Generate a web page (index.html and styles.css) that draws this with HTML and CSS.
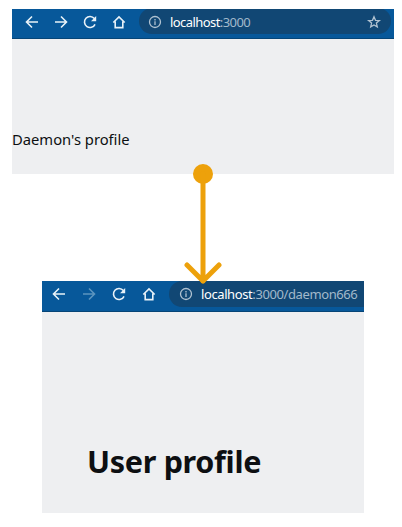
FILE: index.html
```html
<!DOCTYPE html>
<html lang="en">
<head>
<meta charset="utf-8">
<title>Profile navigation</title>
<link rel="stylesheet" href="styles.css">
</head>
<body>
<svg class="symbols" aria-hidden="true">
  <symbol id="back" viewBox="0 0 16 16"><path d="M14 8H2.500M8 2.500 2.500 8 8 13.500"/></symbol>
  <symbol id="forward" viewBox="0 0 16 16"><path d="M2 8h11.500M8 2.500 13.500 8 8 13.500"/></symbol>
  <symbol id="reload" viewBox="0 0 16 16"><path d="M13 10.300A5.500 5.500 0 1 1 12.300 4.600"/><path class="solid" d="M14.200 2v5.200H9z"/></symbol>
  <symbol id="home" viewBox="0 0 16 16"><path d="M2.300 8.500 8 2.900l5.700 5.600M4.200 7.400v6.200h7.600v-6.200"/></symbol>
  <symbol id="info" viewBox="0 0 16 16"><circle cx="8" cy="8" r="5.500"/><path d="M8 7.300v3.700M8 5v1.400"/></symbol>
  <symbol id="star" viewBox="0 0 16 16"><path d="m8 2.700 1.500 3.600 3.900.3-3 2.500.9 3.800L8 10.900l-3.300 2 .9-3.800-3-2.500 3.900-.3z"/></symbol>
</svg>
<main class="flow">
  <section class="window first">
    <header class="toolbar">
      <nav class="buttons">
        <svg class="icon"><use href="#back"/></svg>
        <svg class="icon"><use href="#forward"/></svg>
        <svg class="icon"><use href="#reload"/></svg>
        <svg class="icon"><use href="#home"/></svg>
      </nav>
      <div class="address">
        <svg class="icon info"><use href="#info"/></svg>
        <span class="url"><span class="host">localhost</span>:3000</span>
        <svg class="icon star"><use href="#star"/></svg>
      </div>
    </header>
    <p class="label">Daemon's profile</p>
  </section>
  <svg class="arrow" viewBox="0 0 38 120">
    <circle cx="19" cy="10" r="10"/>
    <path d="M19 10v107M3 101l16 16 16-16"/>
  </svg>
  <section class="window second">
    <header class="toolbar">
      <nav class="buttons">
        <svg class="icon"><use href="#back"/></svg>
        <svg class="icon disabled"><use href="#forward"/></svg>
        <svg class="icon"><use href="#reload"/></svg>
        <svg class="icon"><use href="#home"/></svg>
      </nav>
      <div class="address">
        <svg class="icon info"><use href="#info"/></svg>
        <span class="url"><span class="host">localhost</span>:3000/daemon666</span>
      </div>
    </header>
    <h1 class="title">User profile</h1>
  </section>
</main>
</body>
</html>
```
FILE: styles.css
```css
* { box-sizing: border-box; }
body {
  margin: 0;
  background: #fff;
  color: #0d0f12;
  font-family: "Noto Sans", "Open Sans", sans-serif;
}
.symbols { position: absolute; width: 0; height: 0; }
.flow {
  position: relative;
  display: flex;
  flex-direction: column;
  height: 527px;
  padding: 9px 0 0 12px;
}
.window { background: #eeeff1; overflow: hidden; }
.first { width: 382px; height: 165px; }
.second { width: 322px; height: 232px; margin: 107px 0 0 30px; }
.toolbar {
  display: flex;
  align-items: flex-start;
  height: 30px;
  background: #07589a;
  border-bottom: 1px solid #064577;
}
.second .toolbar { height: 31px; }
.buttons { display: flex; gap: 13px; padding: 5px 0 0 12px; }
.second .buttons { gap: 14px; padding-left: 9px; }
.icon {
  flex: none;
  width: 16px;
  height: 16px;
  fill: none;
  stroke: #e9f2f8;
  stroke-width: 1.6;
}
.solid { fill: #e9f2f8; stroke: none; }
.disabled { stroke: #5c94bf; }
.address {
  display: flex;
  align-items: center;
  width: 252px;
  height: 26px;
  margin: -1px 0 0 12px;
  padding: 2px 9px 0 8px;
  border-radius: 13px;
  background: #114774;
}
.second .address {
  flex: none;
  width: 210px;
  margin: 0 0 0 12px;
  padding: 0 0 0 9px;
}
.info, .star { stroke: #b0c2d1; stroke-width: 1.3; }
.star { margin-left: auto; }
.url {
  margin-left: 7px;
  font-size: 13px;
  line-height: 18px;
  letter-spacing: -0.57px;
  color: #a2b9cb;
  white-space: nowrap;
}
.second .url { letter-spacing: -0.4px; }
.host { color: #fff; }
.label {
  margin: 90px 0 0;
  font-size: 14.75px;
  line-height: 20px;
  white-space: nowrap;
}
.title {
  margin: 128px 0 0 45px;
  font-size: 30.5px;
  line-height: 43px;
  font-weight: 700;
  letter-spacing: -0.3px;
  white-space: nowrap;
}
.arrow {
  position: absolute;
  left: 184px;
  top: 164px;
  width: 38px;
  height: 120px;
  fill: #eda10b;
}
.arrow path {
  fill: none;
  stroke: #eda10b;
  stroke-width: 5;
  stroke-linecap: round;
  stroke-linejoin: round;
}
```
